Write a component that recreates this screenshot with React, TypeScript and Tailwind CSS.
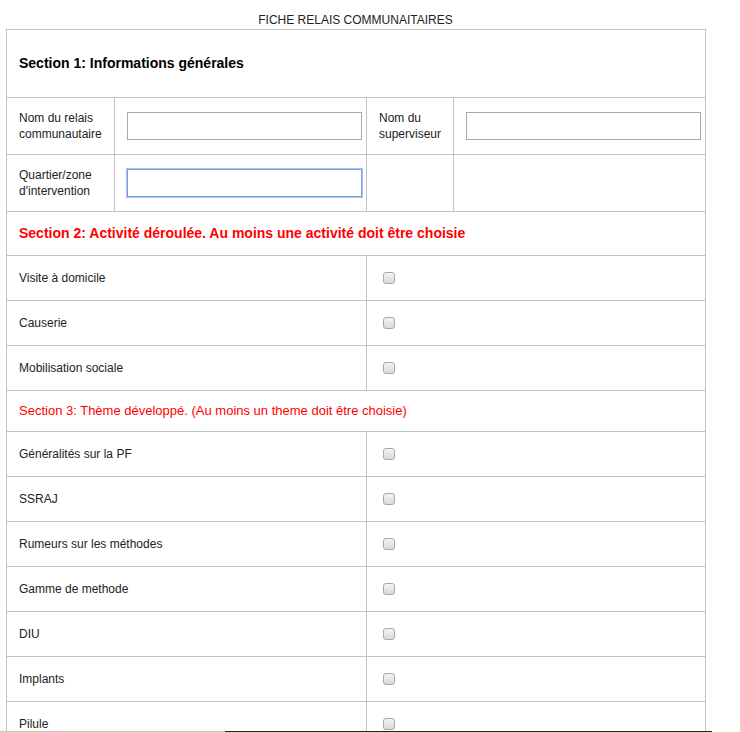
import React from 'react';

const activites = ['Visite à domicile', 'Causerie', 'Mobilisation sociale'];
const themes = [
  'Généralités sur la PF',
  'SSRAJ',
  'Rumeurs sur les méthodes',
  'Gamme de methode',
  'DIU',
  'Implants',
  'Pilule',
];

function Check() {
  return (
    <input
      type="checkbox"
      className="ml-[4px] block h-[12px] w-[12px] cursor-pointer appearance-none rounded-[3px] border border-[#a9a9a9] bg-gradient-to-b from-[#f4f4f4] to-[#d9d9d9]"
    />
  );
}

function CheckRow({ label }: { label: string }) {
  return (
    <tr className="h-[45px]">
      <td colSpan={2} className="border border-[#c3c3c3] px-3 align-middle text-[12px] text-[#222]">
        {label}
      </td>
      <td colSpan={2} className="border border-[#c3c3c3] px-3 align-middle">
        <Check />
      </td>
    </tr>
  );
}

export default function App() {
  return (
    <div className="min-h-[732px] bg-white font-['Liberation_Sans',Arial,sans-serif] text-[#222]">
      <div className="w-[712px] pt-[13px]">
        <div className="pl-[6px]">
          <div className="w-[699px] text-center text-[12px] leading-[14px] text-[#222]">
            FICHE RELAIS COMMUNAITAIRES
          </div>
          <table className="mt-[2px] w-[699px] table-fixed border-collapse">
            <colgroup>
              <col className="w-[108px]" />
              <col className="w-[252px]" />
              <col className="w-[87px]" />
              <col className="w-[252px]" />
            </colgroup>
            <tbody>
              <tr className="h-[68px]">
                <td colSpan={4} className="border border-[#c3c3c3] px-3 align-middle text-[14px] font-bold text-black">
                  Section 1: Informations générales
                </td>
              </tr>
              <tr className="h-[57px]">
                <td className="border border-[#c3c3c3] px-3 align-middle text-[12px] leading-[16px]">
                  Nom du relais communautaire
                </td>
                <td className="border border-[#c3c3c3] pl-3 align-middle">
                  <input type="text" className="block h-[28px] w-[235px] border border-[#a9a9a9] bg-white px-1 text-[13px] outline-none" />
                </td>
                <td className="border border-[#c3c3c3] px-3 align-middle text-[12px] leading-[16px]">
                  Nom du superviseur
                </td>
                <td className="border border-[#c3c3c3] pl-3 align-middle">
                  <input type="text" className="block h-[28px] w-[235px] border border-[#a9a9a9] bg-white px-1 text-[13px] outline-none" />
                </td>
              </tr>
              <tr className="h-[57px]">
                <td className="border border-[#c3c3c3] px-3 align-middle text-[12px] leading-[16px]">
                  Quartier/zone d'intervention
                </td>
                <td className="border border-[#c3c3c3] pl-3 align-middle">
                  <input
                    type="text"
                    autoFocus
                    className="block h-[28px] w-[235px] border border-[#7b9fdc] bg-white px-[5px] text-[13px] shadow-[0_0_0_1px_#a9c4ee] outline-none"
                  />
                </td>
                <td className="border border-[#c3c3c3]" />
                <td className="border border-[#c3c3c3]" />
              </tr>
              <tr className="h-[44px]">
                <td colSpan={4} className="border border-[#c3c3c3] px-3 align-middle text-[14px] font-bold text-[#f00]">
                  Section 2: Activité déroulée. Au moins une activité doit être choisie
                </td>
              </tr>
              {activites.map((a) => (
                <CheckRow key={a} label={a} />
              ))}
              <tr className="h-[41px]">
                <td colSpan={4} className="border border-[#c3c3c3] px-3 align-middle text-[13px] text-[#f00]">
                  Section 3: Thème développé. (Au moins un theme doit être choisie)
                </td>
              </tr>
              {themes.map((t) => (
                <CheckRow key={t} label={t} />
              ))}
            </tbody>
          </table>
        </div>
      </div>
      {/* bottom edge of the window */}
      <div className="fixed bottom-0 left-0 flex h-px w-[712px]">
        <div className="w-[225px] bg-[#c8c8c8]" />
        <div className="flex-1 bg-[#222]" />
      </div>
    </div>
  );
}
